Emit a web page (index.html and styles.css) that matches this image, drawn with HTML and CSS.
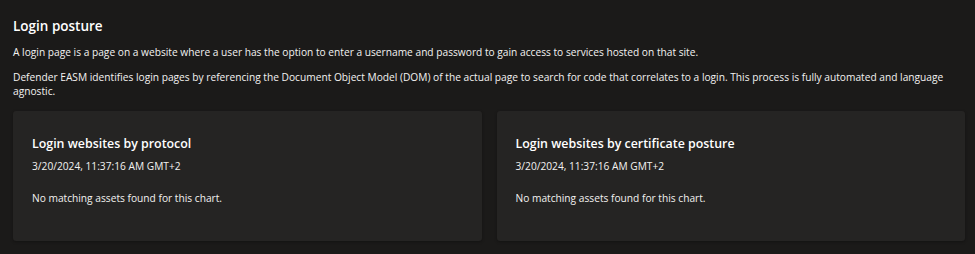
FILE: index.html
```html
<!DOCTYPE html>
<html>
	<head>
		<meta charset="UTF-8">
		<title>Login posture</title>
		<link rel="stylesheet" href="styles.css">
	</head>
	<body>
		<div class="section">
			<h2 class="section_title">Login posture</h2>
			<p class="section_text">A login page is a page on a website where a user has the option to enter a username and password to gain access to services hosted on that site.</p>
			<p class="section_text">Defender EASM identifies login pages by referencing the Document Object Model (DOM) of the actual page to search for code that correlates to a login. This process is fully automated and language agnostic.</p>
			<div class="cards">
				<div class="card">
					<h3 class="card_title">Login websites by protocol</h3>
					<div class="card_date">3/20/2024, 11:37:16 AM GMT+2</div>
					<div class="card_empty">No matching assets found for this chart.</div>
				</div>
				<div class="card">
					<h3 class="card_title">Login websites by certificate posture</h3>
					<div class="card_date">3/20/2024, 11:37:16 AM GMT+2</div>
					<div class="card_empty">No matching assets found for this chart.</div>
				</div>
			</div>
		</div>
	</body>
</html>
```

FILE: styles.css
```css
* {
	margin: 0px;
	padding: 0px;
}
html, body {
	background: #1b1a19;
	height: 100%;
}
body {
	font-family: "Open Sans", "Noto Sans", sans-serif;
	color: #f3f2f1;
}
.section {
	padding: 16px 10px 0 13px;
}
.section_title {
	font-size: 13.5px;
	font-weight: 600;
	line-height: 20px;
	color: #ffffff;
	margin-bottom: 9px;
}
.section_text {
	font-size: 10.2px;
	line-height: 14.5px;
	margin-bottom: 10px;
}
.cards {
	display: grid;
	grid-template-columns: 1fr 1fr;
	gap: 15px;
	margin-top: 12px;
}
.card {
	background: #252423;
	border-radius: 3px;
	height: 130px;
	padding: 24px 19px 0 19px;
	box-sizing: border-box;
	box-shadow: 0 1px 3px rgba(0, 0, 0, 0.3);
}
.card_title {
	font-size: 12.4px;
	font-weight: 600;
	line-height: 18px;
	color: #ffffff;
}
.card_date {
	font-size: 10.2px;
	line-height: 14px;
	margin-top: 6px;
}
.card_empty {
	font-size: 10.2px;
	line-height: 14px;
	margin-top: 18px;
}
```
